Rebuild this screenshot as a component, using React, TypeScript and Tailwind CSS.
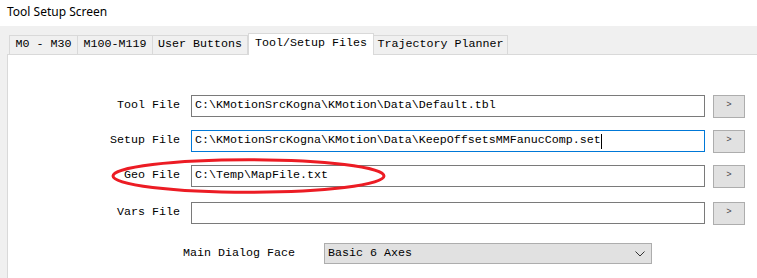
import React from 'react';

const mono = { fontFamily: '"Liberation Mono", "Courier New", monospace' };

const tabs = ['M0 - M30', 'M100-M119', 'User Buttons', 'Tool/Setup Files', 'Trajectory Planner'];
const tabWidths = ['w-[69px]', 'w-[76px]', 'w-[96px]', 'w-[126px]', 'w-[135px]'];

interface FileRow {
  label: string;
  value: string;
  focused?: boolean;
  circled?: boolean;
  mt: string;
}

const rows: FileRow[] = [
  { label: 'Tool File', value: 'C:\\KMotionSrcKogna\\KMotion\\Data\\Default.tbl', mt: 'mt-[40px]' },
  { label: 'Setup File', value: 'C:\\KMotionSrcKogna\\KMotion\\Data\\KeepOffsetsMMFanucComp.set', focused: true, mt: 'mt-[13px]' },
  { label: 'Geo File', value: 'C:\\Temp\\MapFile.txt', circled: true, mt: 'mt-[13px]' },
  { label: 'Vars File', value: '', mt: 'mt-[15px]' },
];

const App: React.FC = () => {
  return (
    <div className="w-[757px] h-[278px] overflow-hidden bg-[#f0f0f0] text-black">
      {/* Window title */}
      <div className="h-[26px] bg-white pl-[7px] pt-[3px] text-[12px]" style={{ fontFamily: '"Noto Sans", "Open Sans", sans-serif' }}>
        Tool Setup Screen
      </div>

      <div className="pl-[7px]" style={mono}>
        {/* Tabs */}
        <div className="flex items-end h-[28px] pl-[2px] text-[11.67px]">
          {tabs.map((t, i) => {
            const active = i === 3;
            return (
              <div
                key={t}
                className={`${tabWidths[i]} flex items-center justify-center border-t border-l border-r border-[#d9d9d9] ${
                  active ? 'h-[22px] bg-white -mb-px relative z-10 pb-[2px]' : 'h-[19px] bg-[#f0f0f0] -ml-px first:ml-0'
                }`}
              >
                <span className="whitespace-pre">{t}</span>
              </div>
            );
          })}
        </div>

        {/* Panel */}
        <div className="h-[224px] bg-white border-t border-l border-[#d9d9d9] text-[11.67px]">
          {rows.map((r) => (
            <div key={r.label} className={`relative flex items-center h-[22px] ${r.mt}`}>
              <div className="w-[172px] text-right whitespace-pre">{r.label}</div>
              <div
                className={`ml-[11px] w-[514px] h-[22px] flex items-center pl-[3px] border whitespace-pre ${
                  r.focused ? 'border-[#0078d7]' : 'border-[#7a7a7a]'
                }`}
              >
                {r.value}
                {r.focused && <span className="inline-block w-px h-[15px] bg-black" />}
              </div>
              <div className="ml-[8px] w-[32px] h-[23px] bg-[#e1e1e1] border border-[#adadad] flex items-center justify-center text-[9px] text-[#444]">
                &gt;
              </div>
              {r.circled && (
                <svg className="absolute left-[103px] top-[-7px] pointer-events-none" width="275" height="36" viewBox="0 0 275 36">
                  <ellipse cx="137.5" cy="18" rx="135.5" ry="16.2" fill="none" stroke="#ec1c24" strokeWidth="3" />
                </svg>
              )}
            </div>
          ))}

          {/* Main dialog face */}
          <div className="flex items-center mt-[19px] h-[21px]">
            <div className="ml-[175px] w-[141px] whitespace-pre">Main Dialog Face</div>
            <div className="w-[328px] h-[21px] bg-[#e1e1e1] border border-[#adadad] flex items-center justify-between pl-[3px] pr-[6px]">
              <span className="whitespace-pre">Basic 6 Axes</span>
              <svg width="10" height="6" viewBox="0 0 10 6">
                <path d="M0.5 0.5 L5 5 L9.5 0.5" fill="none" stroke="#333" strokeWidth="1" />
              </svg>
            </div>
          </div>
        </div>
      </div>
    </div>
  );
};

export default App;
